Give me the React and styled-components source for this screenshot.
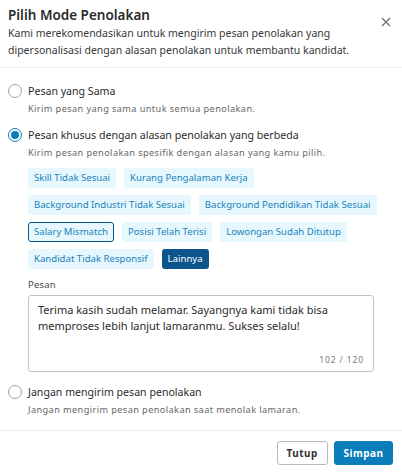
import React from 'react';
import styled, { createGlobalStyle } from 'styled-components';

const GlobalStyle = createGlobalStyle`
  html, body {
    margin: 0;
    padding: 0;
    background: #fff;
  }
  body {
    font-family: "Noto Sans", "Open Sans", sans-serif;
    color: #2e2e2e;
  }
`;

const _color = {
  text: '#2b2b2b',
  muted: '#666666',
  line: '#ececec',
  primary: '#0a7dbb',
  navy: '#0b558c',
  chipBg: '#e6f8fe',
  chipText: '#1a82bb',
};

/**
 * Styled Components
 */
const Modal = styled.div`
  width: 402px;
  height: 473px;
  display: flex;
  flex-direction: column;
  background: #fff;
`;

const Header = styled.header`
  position: relative;
  padding: 5px 40px 8px 8px;
  border-bottom: 1px solid ${_color.line};
`;

const Title = styled.h2`
  margin: 0;
  font-size: 13.5px;
  font-weight: 600;
  line-height: 20px;
  color: ${_color.text};
`;

const Subtitle = styled.p`
  margin: 0;
  width: 350px;
  font-size: 10.5px;
  line-height: 17px;
  color: #383838;
`;

const CloseButton = styled.button`
  position: absolute;
  top: 16px;
  right: 10px;
  width: 12px;
  height: 12px;
  padding: 0;
  border: 0;
  background: none;
  cursor: pointer;
`;

const Body = styled.div`
  flex: 1;
  padding: 14px 8px 0;
  display: flex;
  flex-direction: column;
  gap: 9px;
`;

const Option = styled.div`
  display: grid;
  grid-template-columns: 14px 1fr;
  column-gap: 6px;
  align-items: center;
`;

const Radio = styled.span`
  width: 14px;
  height: 14px;
  box-sizing: border-box;
  border-radius: 50%;
  border: 1px solid ${(p) => (p.checked ? _color.primary : '#a0a0a0')};
  display: flex;
  align-items: center;
  justify-content: center;

  &:after {
    content: '';
    display: ${(p) => (p.checked ? 'block' : 'none')};
    width: 8px;
    height: 8px;
    border-radius: 50%;
    background: ${_color.primary};
  }
`;

const OptionLabel = styled.span`
  font-size: 10.6px;
  line-height: 18px;
  color: ${_color.text};
`;

const OptionDesc = styled.div`
  grid-column: 2;
  margin-top: 1px;
  font-size: 9.2px;
  line-height: 16px;
  letter-spacing: 0.4px;
  color: ${_color.muted};
`;

const Extra = styled.div`
  grid-column: 2;
  margin-top: 7px;
  margin-bottom: 2px;
`;

const Chips = styled.div`
  display: flex;
  flex-wrap: wrap;
  gap: 7px 8px;
  width: 350px;
`;

const Chip = styled.button`
  height: 20px;
  padding: 0 5px;
  box-sizing: border-box;
  border-radius: 3px;
  border: 1px solid ${(p) => (p.outlined ? _color.navy : 'transparent')};
  background: ${(p) => (p.active ? _color.navy : _color.chipBg)};
  color: ${(p) => (p.active ? '#fff' : _color.chipText)};
  font-family: inherit;
  font-size: 9.6px;
  line-height: 18px;
  cursor: pointer;
`;

const FieldLabel = styled.div`
  margin-top: 9px;
  font-size: 9.5px;
  line-height: 14px;
  letter-spacing: 0.2px;
  color: #4a4a4a;
`;

const TextBox = styled.div`
  position: relative;
  margin-top: 3px;
  width: 346px;
  height: 77px;
  box-sizing: border-box;
  border: 1px solid #c4c4c4;
  border-radius: 3px;
  padding: 6px 9px;
  font-size: 11px;
  line-height: 16px;
  color: ${_color.text};
`;

const Counter = styled.span`
  position: absolute;
  right: 9px;
  bottom: 5px;
  font-size: 8.5px;
  line-height: 12px;
  letter-spacing: 0.9px;
  color: #777;
`;

const Footer = styled.footer`
  display: flex;
  justify-content: flex-end;
  gap: 6px;
  padding: 10px 9px 8px;
  border-top: 1px solid ${_color.line};
`;

const Button = styled.button`
  height: 24px;
  padding: 0 ${(p) => (p.primary ? '8.5px' : '9px')};
  box-sizing: border-box;
  border-radius: 3px;
  border: 1px solid ${(p) => (p.primary ? _color.primary : '#b8b8b8')};
  background: ${(p) => (p.primary ? _color.primary : '#fff')};
  color: ${(p) => (p.primary ? '#fff' : '#333')};
  font-family: inherit;
  font-size: 10px;
  font-weight: 700;
  letter-spacing: 0.5px;
  cursor: pointer;
`;

const reasons = [
  { label: 'Skill Tidak Sesuai' },
  { label: 'Kurang Pengalaman Kerja' },
  { label: 'Background Industri Tidak Sesuai' },
  { label: 'Background Pendidikan Tidak Sesuai' },
  { label: 'Salary Mismatch', outlined: true },
  { label: 'Posisi Telah Terisi' },
  { label: 'Lowongan Sudah Ditutup' },
  { label: 'Kandidat Tidak Responsif' },
  { label: 'Lainnya', active: true },
];

const RadioOption = ({ checked, label, desc, children }) => (
  <Option>
    <Radio checked={checked} />
    <OptionLabel>{label}</OptionLabel>
    <OptionDesc>{desc}</OptionDesc>
    {children && <Extra>{children}</Extra>}
  </Option>
);

/**
 * App Component
 */
const App = () => {
  return (
    <Modal>
      <GlobalStyle />
      <Header>
        <Title>Pilih Mode Penolakan</Title>
        <Subtitle>
          Kami merekomendasikan untuk mengirim pesan penolakan yang dipersonalisasi dengan alasan
          penolakan untuk membantu kandidat.
        </Subtitle>
        <CloseButton aria-label="Tutup">
          <svg width="12" height="12" viewBox="0 0 12 12">
            <path d="M2 2 L10 10 M10 2 L2 10" stroke="#6b6b6b" strokeWidth="1.1" />
          </svg>
        </CloseButton>
      </Header>
      <Body>
        <RadioOption
          label="Pesan yang Sama"
          desc="Kirim pesan yang sama untuk semua penolakan."
        />
        <RadioOption
          checked
          label="Pesan khusus dengan alasan penolakan yang berbeda"
          desc="Kirim pesan penolakan spesifik dengan alasan yang kamu pilih."
        >
          <Chips>
            {reasons.map((r) => (
              <Chip key={r.label} outlined={r.outlined} active={r.active}>
                {r.label}
              </Chip>
            ))}
          </Chips>
          <FieldLabel>Pesan</FieldLabel>
          <TextBox>
            Terima kasih sudah melamar. Sayangnya kami tidak bisa memproses lebih lanjut lamaranmu.
            Sukses selalu!
            <Counter>102 / 120</Counter>
          </TextBox>
        </RadioOption>
        <RadioOption
          label="Jangan mengirim pesan penolakan"
          desc="Jangan mengirim pesan penolakan saat menolak lamaran."
        />
      </Body>
      <Footer>
        <Button>Tutup</Button>
        <Button primary>Simpan</Button>
      </Footer>
    </Modal>
  );
};

export default App;
